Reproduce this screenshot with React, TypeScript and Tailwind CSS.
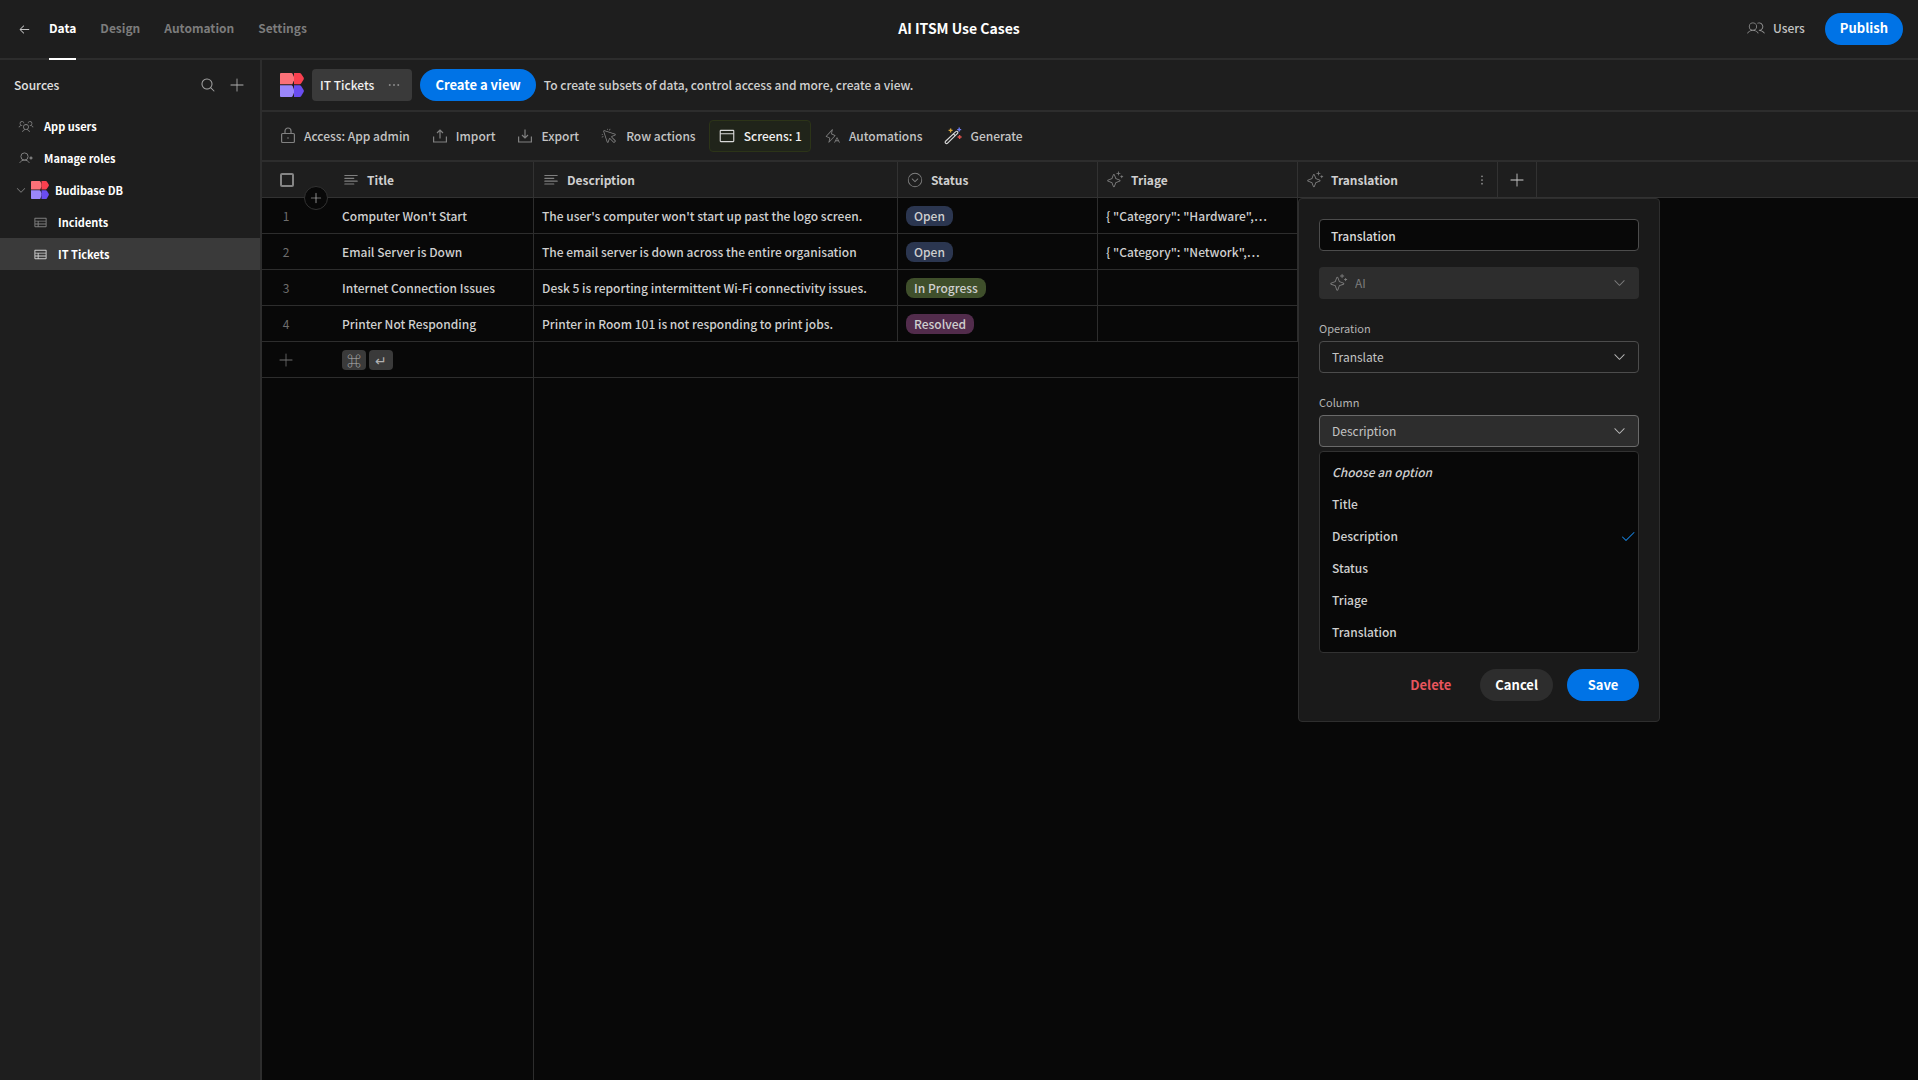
import { useState } from "react";
import type { ReactNode } from "react";
import {
  PiArrowLeft,
  PiBrowser,
  PiCaretCircleDownLight,
  PiCaretDown,
  PiCheck,
  PiCursorClickLight,
  PiDotsThreeBold,
  PiDotsThreeVerticalBold,
  PiLightningALight,
  PiMagnifyingGlass,
  PiPlusLight,
  PiSparkleLight,
  PiTable,
  PiTextAlignLeft,
  PiUsersLight,
  PiUsersThreeLight,
} from "react-icons/pi";

const rows = [
  { title: "Computer Won't Start", description: "The user's computer won't start up past the logo screen.", status: "Open", triage: `{ "Category": "Hardware",…` },
  { title: "Email Server is Down", description: "The email server is down across the entire organisation", status: "Open", triage: `{ "Category": "Network",…` },
  { title: "Internet Connection Issues", description: "Desk 5 is reporting intermittent Wi-Fi connectivity issues.", status: "In Progress", triage: "" },
  { title: "Printer Not Responding", description: "Printer in Room 101 is not responding to print jobs.", status: "Resolved", triage: "" },
];

const statusColors: Record<string, string> = {
  Open: "bg-[#2b3650]",
  "In Progress": "bg-[#3f4f2b]",
  Resolved: "bg-[#522c4c]",
};

const columnOptions = ["Title", "Description", "Status", "Triage", "Translation"];

function Logo({ size }: { size: number }) {
  return (
    <svg width={size} height={size} viewBox="0 0 24 24" className="shrink-0">
      <path d="M0 1Q0 0 1 0H11.4Q12.2 0 12.6 .7L14 4V7.2L12.4 11.2H0Z" fill="#fc7178" />
      <path d="M14 0H19.6Q20.6 0 21.1 .8L23.6 4.6Q24.1 5.6 23.6 6.6L21.1 10.4Q20.6 11.2 19.6 11.2H14Z" fill="#f9404f" />
      <path d="M0 12.2H11.4Q12.2 12.2 12.6 12.9L14 16.4V19.8L12.6 23.3Q12.2 24 11.4 24H1Q0 24 0 23Z" fill="#9b87fb" />
      <path d="M14 12.2H19.6Q20.6 12.2 21.1 13L23.6 17.1Q24.1 18.1 23.6 19.1L21.1 23.2Q20.6 24 19.6 24H14Z" fill="#6a4df0" />
    </svg>
  );
}

function LockIcon() {
  return (
    <svg width="16" height="18" viewBox="0 0 16 18" fill="none" stroke="currentColor" strokeWidth="1.2" className="shrink-0">
      <rect x="1.6" y="6.5" width="12.8" height="9" rx="1" />
      <path d="M5 6.5V4a3 3 0 0 1 6 0v2.5" />
      <circle cx="8" cy="11" r=".8" fill="currentColor" stroke="none" />
    </svg>
  );
}

function TrayIcon({ down = false }: { down?: boolean }) {
  return (
    <svg width="16" height="18" viewBox="0 0 16 18" fill="none" stroke="currentColor" strokeWidth="1.2" className="shrink-0">
      <path d="M1.6 9.5V15h12.8V9.5" />
      {down ? <path d="M8 2.5V11M5 8l3 3 3-3" /> : <path d="M8 11.5V3M5 6l3-3 3 3" />}
    </svg>
  );
}

function RoleIcon() {
  return (
    <svg width="14" height="12" viewBox="0 0 14 12" fill="none" stroke="currentColor" strokeWidth="1" className="shrink-0">
      <circle cx="5.5" cy="4.5" r="3.6" />
      <path d="M.7 10.8C1.8 9 3.4 8.1 5.5 8.1s3.7.9 4.8 2.7" />
      <circle cx="12" cy="6" r="1.1" fill="currentColor" />
    </svg>
  );
}

function WandIcon() {
  return (
    <svg width="18" height="18" viewBox="0 0 18 18" fill="none" className="shrink-0">
      <path d="M1.6 14.2 11.8 4.6a1.2 1.2 0 0 1 1.7 1.7L3.6 16.2a1.3 1.3 0 0 1-2-2Z" stroke="#d8d8d8" strokeWidth="1.2" />
      <path d="m9.4 6.9 1.8 1.8" stroke="#d8d8d8" strokeWidth="1.2" />
      <path d="M6.6 1.4v4M4.6 3.4h4" stroke="#d9a73a" strokeWidth="1.4" />
      <path d="M15.2 .6v4M13.2 2.6h4" stroke="#6d7cf0" strokeWidth="1.4" />
      <path d="M15.6 8v4M13.6 10h4" stroke="#e0524a" strokeWidth="1.4" />
    </svg>
  );
}

function ToolButton({ icon, label, active = false }: { icon: ReactNode; label: string; active?: boolean }) {
  return (
    <button
      className={
        active
          ? "flex h-8 items-center gap-2 rounded border border-[#2c3418] bg-[#20241a] px-2 text-[#f0f0f0]"
          : "flex h-8 items-center gap-2 rounded border border-transparent px-2 text-[#c4c4c4]"
      }
    >
      <span className={active ? "flex text-[#d8d8d8]" : "flex text-[#808080]"}>{icon}</span>
      {label}
    </button>
  );
}

function SourceItem({ icon, label, nested = false, active = false }: { icon: ReactNode; label: string; nested?: boolean; active?: boolean }) {
  return (
    <a
      href="#"
      className={`flex h-8 items-center gap-2.5 text-[11px] font-bold text-white ${nested ? "pl-8" : "pl-[18px]"} ${active ? "bg-[#3a3a3a]" : ""}`}
    >
      <span className={active ? "flex w-4 justify-center text-[#d0d0d0]" : "flex w-4 justify-center text-[#808080]"}>{icon}</span>
      {label}
    </a>
  );
}

function HeaderLabel({ icon, label }: { icon: ReactNode; label: string }) {
  return (
    <span className="flex items-center gap-[7px]">
      <span className="flex w-[18px] justify-center text-[#808080]">{icon}</span>
      {label}
    </span>
  );
}

function SelectField({ id, label, value }: { id: string; label: string; value: string }) {
  const open = id === "column";
  return (
    <div className="mt-4">
      <label htmlFor={id} className="block h-[26px] text-[11px] leading-[26px] text-[#b4b4b4]">
        {label}
      </label>
      <div className="relative">
        <select
          id={id}
          defaultValue={value}
          className={`h-8 w-full appearance-none rounded border pl-3 pr-8 text-[#c4c4c4] ${open ? "border-[#6a6a6a] bg-[#2d2d2d]" : "border-[#4c4c4c] bg-[#1a1a1a]"}`}
        >
          <option>{value}</option>
        </select>
        <PiCaretDown size={15} className="pointer-events-none absolute right-3 top-2 text-[#b8b8b8]" />
      </div>
    </div>
  );
}

function ColumnPopover() {
  const [name, setName] = useState("Translation");
  const [column, setColumn] = useState("Description");

  return (
    <div className="absolute left-0 top-9 z-20 w-[362px] rounded border border-[#2e2e2e] bg-[#1a1a1a] p-5 font-normal">
      <input
        aria-label="Column name"
        value={name}
        onChange={(e) => setName(e.target.value)}
        className="h-8 w-full rounded border border-[#4c4c4c] bg-[#080808] px-[11px] font-medium text-[#dadada]"
      />

      <div className="relative mt-4 text-[#7c7c7c]">
        <select aria-label="Type" disabled className="h-8 w-full appearance-none rounded bg-[#2d2d2d] pl-9 opacity-100">
          <option>AI</option>
        </select>
        <PiSparkleLight size={19} className="pointer-events-none absolute left-2.5 top-1.5" />
        <PiCaretDown size={15} className="pointer-events-none absolute right-3 top-2" />
      </div>

      <SelectField id="operation" label="Operation" value="Translate" />
      <SelectField id="column" label="Column" value={column} />

      {/* Options */}
      <ul role="listbox" aria-label="Column options" className="mt-1 rounded border border-[#323232] bg-[#080808] py-1 font-medium text-[#cfcfcf]">
        <li role="option" aria-selected={false} className="flex h-8 items-center px-3 italic">
          Choose an option
        </li>
        {columnOptions.map((option) => (
          <li
            key={option}
            role="option"
            aria-selected={option === column}
            onClick={() => setColumn(option)}
            className="flex h-8 items-center justify-between pl-3 pr-0.5"
          >
            {option}
            {option === column && <PiCheck size={16} className="text-[#1783e0]" />}
          </li>
        ))}
      </ul>

      {/* Buttons */}
      <div className="mt-4 flex items-center justify-end text-[13px] font-bold">
        <button className="h-8 px-[15px] text-[#e8555d]">Delete</button>
        <button className="ml-3.5 h-8 rounded-full bg-[#2d2d2d] px-[15px] text-white">Cancel</button>
        <button className="ml-3.5 h-8 w-[72px] rounded-full bg-[#0073e6] text-white">Save</button>
      </div>
    </div>
  );
}

function TopBar() {
  return (
    <header className="grid h-[60px] grid-cols-[1fr_auto_1fr] items-center border-b-2 border-[#2d2d2d] bg-[#1e1e1e]">
      <nav className="flex h-[58px] items-center gap-6 pl-[18px] font-bold text-[#7c7c7c]">
        <button aria-label="Back" className="-mr-1.5 text-[#c4c4c4]">
          <PiArrowLeft size={13} />
        </button>
        <a href="#" className="-mb-0.5 flex h-[60px] items-center border-b-2 border-white pb-0.5 text-white">Data</a>
        <a href="#" className="pb-0.5">Design</a>
        <a href="#" className="pb-0.5">Automation</a>
        <a href="#" className="pb-0.5">Settings</a>
      </nav>
      <h1 className="pb-0.5 text-sm font-bold text-white">AI ITSM Use Cases</h1>
      <div className="flex items-center justify-end gap-5 pr-[15px]">
        <button className="flex items-center gap-2 pb-0.5 font-medium text-[#c4c4c4]">
          <PiUsersLight size={18} className="text-[#909090]" />
          Users
        </button>
        <button className="h-8 rounded-full bg-[#0073e6] px-[15px] pb-0.5 text-[13px] font-bold text-white">Publish</button>
      </div>
    </header>
  );
}

function Sidebar() {
  return (
    <aside className="w-[262px] shrink-0 border-r-2 border-[#2d2d2d] bg-[#1e1e1e]">
      <div className="flex h-[50px] items-center pl-3.5 pr-3.5">
        <h2 className="flex-1 font-medium text-[#e0e0e0]">Sources</h2>
        <button aria-label="Search" className="mr-3 text-[#a0a0a0]">
          <PiMagnifyingGlass size={16} />
        </button>
        <button aria-label="Add source" className="text-[#b0b0b0]">
          <PiPlusLight size={18} />
        </button>
      </div>
      <SourceItem icon={<PiUsersThreeLight size={16} />} label="App users" />
      <SourceItem icon={<RoleIcon />} label="Manage roles" />
      <a href="#" className="flex h-8 items-center pl-[15px] text-[11px] font-bold text-white">
        <PiCaretDown size={12} className="mr-1 text-[#808080]" />
        <Logo size={18} />
        <span className="ml-1.5">Budibase DB</span>
      </a>
      <SourceItem nested icon={<PiTable size={15} />} label="Incidents" />
      <SourceItem nested active icon={<PiTable size={15} />} label="IT Tickets" />
    </aside>
  );
}

function Grid() {
  const th = "h-9 border-b border-r border-[#323232] bg-[#1e1e1e] px-2 text-left font-bold";
  const td = "h-9 truncate border-b border-r border-[#2d2d2d] px-2";

  return (
    <div className="flex flex-1 flex-col bg-[#080808]">
      <table className="w-full table-fixed border-separate border-spacing-0 font-medium text-[#cfcfcf]">
        <colgroup>
          <col className="w-[72px]" />
          <col className="w-[200px]" />
          <col className="w-[364px]" />
          <col className="w-[200px]" />
          <col className="w-[200px]" />
          <col className="w-[200px]" />
          <col className="w-[39px]" />
          <col />
        </colgroup>
        <thead>
          <tr>
            <th className="relative h-9 border-b border-[#323232] bg-[#1e1e1e] pl-[18px]">
              <input type="checkbox" aria-label="Select all rows" className="block size-3.5 appearance-none rounded-xs border-2 border-[#848484]" />
              <button aria-label="Insert row" className="absolute -bottom-[13px] right-1.5 z-10 flex size-6 items-center justify-center rounded-full border border-[#323232] bg-[#080808] text-[#cfcfcf]">
                <PiPlusLight size={14} />
              </button>
            </th>
            <th className={th}><HeaderLabel icon={<PiTextAlignLeft size={18} />} label="Title" /></th>
            <th className={th}><HeaderLabel icon={<PiTextAlignLeft size={18} />} label="Description" /></th>
            <th className={th}><HeaderLabel icon={<PiCaretCircleDownLight size={18} />} label="Status" /></th>
            <th className={th}><HeaderLabel icon={<PiSparkleLight size={19} />} label="Triage" /></th>
            <th className={`relative ${th}`}>
              <div className="flex items-center justify-between">
                <HeaderLabel icon={<PiSparkleLight size={19} />} label="Translation" />
                <button aria-label="Column menu" className="text-[#909090]">
                  <PiDotsThreeVerticalBold size={14} />
                </button>
              </div>
              <ColumnPopover />
            </th>
            <th className="h-9 border-b border-r border-[#323232] bg-[#1e1e1e]">
              <button aria-label="Add column" className="flex w-full justify-center">
                <PiPlusLight size={18} />
              </button>
            </th>
            <th className="h-9 border-b border-[#323232] bg-[#1e1e1e]" />
          </tr>
        </thead>
        <tbody>
          {rows.map((row, i) => (
            <tr key={row.title}>
              <td className="h-9 border-b border-[#2d2d2d] pr-6 text-center font-normal text-[#6e6e6e]">{i + 1}</td>
              <td className={td}>{row.title}</td>
              <td className={td}>{row.description}</td>
              <td className={td}>
                <span className={`flex h-5 w-fit items-center rounded-lg px-2 ${statusColors[row.status]}`}>{row.status}</span>
              </td>
              <td className={td}>{row.triage}</td>
              <td className={td} />
            </tr>
          ))}
          <tr>
            <td className="h-9 border-b border-[#2d2d2d] pl-[15px] text-[#6e6e6e]">
              <button aria-label="Add row" className="block">
                <PiPlusLight size={18} />
              </button>
            </td>
            <td className={td}>
              <div className="flex gap-[3px] text-sm text-[#b0b0b0]">
                <kbd className="flex h-5 w-6 items-center justify-center rounded bg-[#3a3a3a] font-[inherit]">⌘</kbd>
                <kbd className="flex h-5 w-6 items-center justify-center rounded bg-[#3a3a3a] font-[inherit]">↵</kbd>
              </div>
            </td>
            <td colSpan={4} className="h-9 border-b border-[#2d2d2d]" />
          </tr>
        </tbody>
      </table>
      <div className="w-[272px] flex-1 border-r border-[#2d2d2d]" />
    </div>
  );
}

export default function App() {
  return (
    <div className="flex min-h-screen flex-col bg-[#080808] font-['Noto_Sans_CJK_SC',sans-serif] text-xs leading-5">
      <TopBar />
      <div className="flex flex-1">
        <Sidebar />
        <main className="flex min-w-0 flex-1 flex-col">
          <div className="flex h-[52px] items-center gap-2 border-b-2 border-[#2d2d2d] bg-[#1e1e1e] pl-[18px] font-medium">
            <Logo size={24} />
            <div className="flex h-8 items-center gap-3 rounded bg-[#3a3a3a] pl-2 pr-2.5 text-[#f0f0f0]">
              IT Tickets
              <button aria-label="Table options" className="text-[#8a8a8a]">
                <PiDotsThreeBold size={16} />
              </button>
            </div>
            <button className="h-8 rounded-full bg-[#0073e6] px-[15px] text-[13px] font-bold text-white">Create a view</button>
            <p className="text-[#d0d0d0]">To create subsets of data, control access and more, create a view.</p>
          </div>

          <div className="flex h-[50px] items-center gap-1 border-b-2 border-[#2d2d2d] bg-[#1e1e1e] pl-[9px] font-medium">
            <ToolButton icon={<LockIcon />} label="Access: App admin" />
            <ToolButton icon={<TrayIcon />} label="Import" />
            <ToolButton icon={<TrayIcon down />} label="Export" />
            <ToolButton icon={<PiCursorClickLight size={17} />} label="Row actions" />
            <ToolButton active icon={<PiBrowser size={18} />} label="Screens: 1" />
            <ToolButton icon={<PiLightningALight size={17} />} label="Automations" />
            <ToolButton icon={<WandIcon />} label="Generate" />
          </div>

          <Grid />
        </main>
      </div>
    </div>
  );
}
